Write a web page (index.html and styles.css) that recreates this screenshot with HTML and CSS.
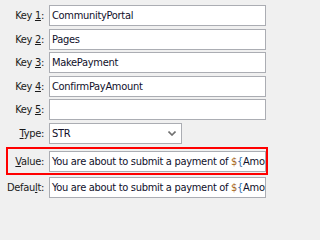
FILE: index.html
```html
<!DOCTYPE html>
<html>
<head>
<meta charset="utf-8">
<link rel="stylesheet" href="styles.css">
</head>
<body>
<div class="form">
  <div class="row">
    <span class="label">Key <u>1</u>:</span>
    <div class="field">CommunityPortal</div>
  </div>
  <div class="row">
    <span class="label">Key <u>2</u>:</span>
    <div class="field">Pages</div>
  </div>
  <div class="row">
    <span class="label">Key <u>3</u>:</span>
    <div class="field">MakePayment</div>
  </div>
  <div class="row">
    <span class="label">Key <u>4</u>:</span>
    <div class="field">ConfirmPayAmount</div>
  </div>
  <div class="row">
    <span class="label">Key <u>5</u>:</span>
    <div class="field"></div>
  </div>
  <div class="row">
    <span class="label"><u>T</u>ype:</span>
    <div class="field select"><span>STR</span>
      <svg class="chev" width="8" height="5" viewBox="0 0 8 5"><path d="M0.5 0.5 L4 4 L7.5 0.5" fill="none" stroke="#707070" stroke-width="1.6"/></svg>
    </div>
  </div>
  <div class="row highlight">
    <span class="label"><u>V</u>alue:</span>
    <div class="field">You are about to submit a payment of <span class="d">$</span><span class="b">{</span>Amount}</div>
  </div>
  <div class="row">
    <span class="label">Defau<u>l</u>t:</span>
    <div class="field">You are about to submit a payment of <span class="d">$</span><span class="b">{</span>Amount}</div>
  </div>
</div>
</body>
</html>
```
FILE: styles.css
```css
html, body {
  margin: 0;
  background: #f0f0f0;
}
body {
  width: 271px;
  height: 202px;
  overflow: hidden;
  font-family: "DejaVu Sans Condensed", "DejaVu Sans", sans-serif;
  font-size: 11px;
  letter-spacing: -0.3px;
  color: #000;
}
.form {
  display: flex;
  flex-direction: column;
  gap: 2.6px;
  padding: 5px 3px 0 6px;
}
.row {
  display: grid;
  grid-template-columns: 36px 1fr;
  column-gap: 5px;
  align-items: center;
  border-left: 2px solid transparent;
  border-right: 2px solid transparent;
}
.row.highlight {
  border: 2px solid #ff0000;
  padding: 2px 0 1px 0;
}
.label {
  justify-self: end;
  white-space: nowrap;
  color: #1a1a1a;
}
.label u {
  text-underline-offset: 1px;
}
.field {
  box-sizing: border-box;
  height: 21px;
  line-height: 19px;
  background: #fff;
  border: 1px solid #abadb3;
  padding: 0 0 0 2px;
  white-space: nowrap;
  overflow: hidden;
  color: #10102a;
}
.select {
  width: 133px;
  display: flex;
  align-items: center;
  justify-content: space-between;
  padding-right: 5px;
}
.chev {
  display: block;
}
.d { color: #a8661a; }
.b { color: #2f6fb0; }
```
